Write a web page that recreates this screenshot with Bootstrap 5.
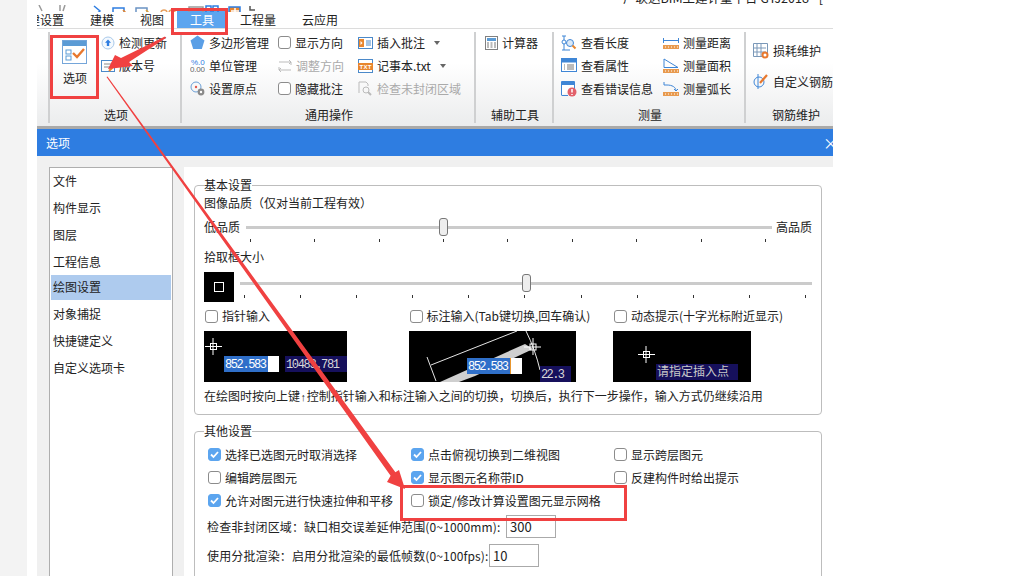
<!DOCTYPE html>
<html lang="zh-CN">

<head>
    <meta charset="UTF-8">
    <meta name="viewport" content="width=device-width, initial-scale=1.0">
    <title>选项</title>
    <link href="https://cdn.jsdelivr.net/npm/bootstrap@5.3.3/dist/css/bootstrap.min.css" rel="stylesheet">
    <style>
        html, body { height: 576px; overflow: hidden; }
        body { font: 12px/18px "Noto Sans CJK SC", "Liberation Sans", sans-serif; color: #222; background: #fff; position: relative; }
        .tc { font-family: "Noto Sans CJK TC", sans-serif; }
        .up-arr { font: 11px "Liberation Mono", monospace; }
        .left-strip { width: 27px; background: #f3f3f3; margin-right: 10px; }
        .app { width: 796px; height: 576px; overflow: hidden; }
        .quick-row { height: 12px; overflow: hidden; position: relative; }
        .quick-title { position: absolute; left: 586px; top: -11px; white-space: nowrap; font-size: 12.5px; }
        .tab-row { height: 17px; border-bottom: 1px solid #dcdcdc; }
        .tab-item { padding: 0 13px; height: 19px; margin-top: -3px; line-height: 21px; flex: none; }
        .tab-item:first-child { margin-left: -22px; }
        .tab-item.on { background: #5ca5ef; color: #fff; }
        .ribbon { height: 100px; padding-top: 3px; background: linear-gradient(#fff 35%, #ebeced); border-bottom: 3px solid #a9a9a9; }
        .rb-group { height: 91px; border-left: 2px solid #cfd0d1; flex: none; }
        .rg-a { width: 132px; margin-left: 11px; }
        .rg-b { width: 294px; }
        .rg-c { width: 78px; }
        .rg-d { width: 192px; }
        .rg-e { width: 100px; }
        .rb-body { flex: 1 1 auto; min-height: 0; margin-top: -1px; }
        .rg-c .rb-body { padding-left: 9px; }
        .rg-d .rb-body, .rg-e .rb-body { padding-left: 7px; }
        .rb-name { height: 16px; line-height: 16px; text-align: center; padding-left: 2px; }
        .rb-row { height: 23px; white-space: nowrap; }
        .rb-row svg { flex: none; }
        .rb-off { color: #aaa; }
        .big-btn { width: 51px; padding-top: 9px; padding-right: 1px; }
        .big-btn span { margin-top: 5px; }
        .col-b1 { width: 96px; padding-left: 8px; }
        .col-b2 { width: 80px; }
        .col-d1 { width: 102px; }
        .caret-down { width: 0; height: 0; border: 3px solid transparent; border-top: 4px solid #666; border-bottom: 0; margin-left: 5px; }
        .cb { width: 13px; height: 13px; border: 1px solid #8c8c8c; border-radius: 3px; background: #fff; flex: none; display: inline-block; }
        .cb.on { background: #5ca5ef; border-color: #5ca5ef; }
        .cb svg { display: block; }
        .dlg-title { height: 27px; background: #2e7de1; color: #fff; padding-left: 9px; line-height: 28px; }
        .dlg-x { margin-right: -5px; font-size: 15px; }
        .dlg-body { background: #f0f0f0; height: 421px; padding: 11px 0 0 12px; }
        .opt-list { width: 124px; height: 420px; border: 1.5px solid #aeaeae; background: #fff; border-radius: 0; padding: 0 1px; flex: none; }
        .opt-list .list-group-item { border: 0; padding: 0 0 0 2px; height: 25px; line-height: 24px; margin: 1px 0; font-size: 12px; color: #222; background: transparent; border-radius: 0; }
        .opt-list .list-group-item.active { background: #aecbee; }
        .set-panel { width: 649px; margin-left: 11px; background: #fff; padding: 10px 11px 0 10px; height: 420px; flex: none; }
        .set-box { border: 1px solid #bdbdbd; border-radius: 4px; padding: 0 9px; margin: 0; }
        .set-box legend { float: none; width: auto; font-size: 12px; line-height: 17px; padding: 0; margin: 0; position: relative; top: -1px; }
        .set-box.basic { height: 238px; margin-bottom: 8px; }
        .set-box.other { height: 200px; }
        .line-h { height: 18px; white-space: nowrap; }
        .qual-row { margin-top: 6px; height: 26px; }
        .qual-low { margin-right: 6px; }
        .sld { position: relative; flex: 1 1 auto; height: 26px; }
        .sld-track { position: absolute; left: 0; right: 0; top: 8px; height: 3px; background: #cbcbcb; }
        .sld-thumb { position: absolute; top: 0; width: 9px; height: 18px; border: 1px solid #777; border-radius: 3px; background: #eee; }
        .sld-ticks { position: absolute; left: 4px; right: 6px; top: 21px; height: 3px; }
        .sld-ticks i { width: 1px; height: 3px; background: #333; display: block; }
        .pick-label { margin-top: 4px; }
        .pick-row { margin-top: 6px; height: 30px; }
        .pick-box { width: 30px; height: 30px; background: #000; flex: none; }
        .pick-box i { display: block; width: 10px; height: 10px; border: 1px solid #fff; }
        .pick-sld { margin: 2px 0 0 6px; }
        .check-grid { display: grid; grid-template-columns: repeat(3, 204.5px); margin-top: 5px; }
        .check-grid .pos { height: 18px; white-space: nowrap; padding-left: 1px; }
        .pic-row { display: grid; grid-template-columns: 205px 204px 138px; margin-top: 6px; }
        .pic-row svg { display: block; }
        .pic-row text { font-family: "Liberation Mono", monospace; font-size: 12px; }
        .pic-row text.cjk { font-family: "Noto Sans CJK SC", sans-serif; }
        .cap-line { margin-top: 5px; }
        .other-grid { display: grid; grid-template-columns: repeat(3, 203px); grid-auto-rows: 23px; margin: 3px 0 0 4px; }
        .other-grid > div { white-space: nowrap; }
        .num-row { height: 23px; margin: 3px 0 6px 3px; white-space: nowrap; }
        .num-a { width: 299px; letter-spacing: .13px; }
        .num-b { width: 282px; letter-spacing: .13px; }
        .num-in { width: 50px; height: 23px; border: 1px solid #aaa; padding: 0 3px; font-size: 13px; line-height: 21px; flex: none; border-radius: 0; background: #fff; color: #222; }
        .mini-txt { font: 8px "Liberation Sans", sans-serif; }
        .mini-bold { font: bold 6px "Liberation Sans", sans-serif; }
        .mark-up { position: absolute; left: 0; top: 0; pointer-events: none; }
    </style>
</head>

<body>
    <div class="d-flex">
        <div class="left-strip"></div>
        <div class="app">
            <div class="quick-row">
                <svg width="230" height="12" fill="none" stroke-width="1.5">
                    <path d="M2 0l3 6M23 0v6M28 0l-2 6" stroke="#9a9a9a"/>
                    <path d="M57 1l6 5-6 5h8" stroke="#2e7de1"/>
                    <rect x="76" y="3" width="11" height="8" stroke="#2e7de1"/>
                    <path d="M86 5l5 5" stroke="#e8862e"/>
                    <rect x="99" y="3" width="11" height="8" stroke="#6a93c4"/>
                    <path d="M109 5l5 5" stroke="#e8a02e"/>
                    <circle cx="127" cy="8" r="3" stroke="#e8a05e"/>
                    <circle cx="135" cy="8" r="3" stroke="#e8a05e"/>
                    <path d="M152 2h14v7h-14z" stroke="#9a9a9a"/>
                    <path d="M169 1v10h5V1zM176 1v10h5V1z" stroke="#2e7de1"/>
                    <rect x="192" y="2" width="11" height="9" fill="#e8862e" stroke="#2e7de1"/>
                    <path d="M198 3v7M194 6h8" stroke="#fff"/>
                    <path d="M213 1v4h5" stroke="#555"/>
                </svg>
                <div class="quick-title">广联达BIM土建计量平台 GTJ2018 - [</div>
            </div>
            <div class="tab-row d-flex">
                <div class="tab-item">建设置</div>
                <div class="tab-item">建模</div>
                <div class="tab-item">视图</div>
                <div class="tab-item on">工具</div>
                <div class="tab-item">工程量</div>
                <div class="tab-item">云应用</div>
            </div>

            <div class="ribbon d-flex">
                <div class="rb-group rg-a d-flex flex-column">
                    <div class="rb-body d-flex">
                        <div class="big-btn d-flex flex-column align-items-center">
                            <svg width="26" height="24" fill="none">
                                <rect x=".5" y=".5" width="24" height="23" fill="#fff" stroke="#74a5d9"/>
                                <rect x="1" y="1" width="23" height="5" fill="#5b9bd5"/>
                                <rect x="4" y="10" width="5" height="4" stroke="#5b9bd5"/>
                                <rect x="4" y="16" width="5" height="4" stroke="#5b9bd5"/>
                                <path d="M11 13l4 4 7-8" stroke="#e8782e" stroke-width="2.4"/>
                            </svg>
                            <span>选项</span>
                        </div>
                        <div>
                            <div class="rb-row d-flex align-items-center gap-1">
                                <svg width="14" height="14" fill="none"><circle cx="7" cy="7" r="6" stroke="#a9c9ea" fill="#f4f9fe"/><path d="M7 3.5l3 3.2H8.2V10H5.8V6.7H4z" fill="#2e7de1"/></svg>
                                <span>检测更新</span>
                            </div>
                            <div class="rb-row d-flex align-items-center gap-1">
                                <svg width="14" height="14" fill="none"><rect x=".5" y="1.5" width="13" height="11" stroke="#4b89c9"/><path d="M3 5h8M3 8h6" stroke="#888"/><path d="M8 12l4-4" stroke="#e8862e" stroke-width="2"/></svg>
                                <span>版本号</span>
                            </div>
                        </div>
                    </div>
                    <div class="rb-name">选项</div>
                </div>

                <div class="rb-group rg-b d-flex flex-column">
                    <div class="rb-body d-flex">
                        <div class="col-b1">
                            <div class="rb-row d-flex align-items-center gap-1">
                                <svg width="15" height="15"><path d="M7.5 .5l7 5-2.7 8.5H3.2L.5 5.5z" fill="#5b9fe6"/></svg>
                                <span>多边形管理</span>
                            </div>
                            <div class="rb-row d-flex align-items-center gap-1">
                                <svg width="15" height="15"><text class="mini-txt" x="1" y="7" fill="#2e7de1">%.0</text><text class="mini-txt" x="0" y="14" fill="#666" textLength="15">0.00</text></svg>
                                <span>单位管理</span>
                            </div>
                            <div class="rb-row d-flex align-items-center gap-1">
                                <svg width="15" height="15" fill="none"><circle cx="6" cy="6" r="5" stroke="#6b9fd6"/><circle cx="6" cy="6" r="1.2" fill="#e2574c"/><circle cx="11" cy="11" r="3.4" fill="#8a8a8a"/><circle cx="11" cy="11" r="1.2" fill="#fff"/></svg>
                                <span>设置原点</span>
                            </div>
                        </div>
                        <div class="col-b2">
                            <div class="rb-row d-flex align-items-center gap-1"><i class="cb"></i><span>显示方向</span></div>
                            <div class="rb-row d-flex align-items-center gap-1 rb-off">
                                <svg width="14" height="14" fill="none" stroke="#bbb"><path d="M1 3h12v3M13 11H1V8"/><path d="M11 1l2 2-2 2M3 9l-2 2 2 2"/></svg>
                                <span>调整方向</span>
                            </div>
                            <div class="rb-row d-flex align-items-center gap-1"><i class="cb"></i><span>隐藏批注</span></div>
                        </div>
                        <div>
                            <div class="rb-row d-flex align-items-center gap-1">
                                <svg width="15" height="14" fill="none"><rect x=".5" y="1.5" width="14" height="11" fill="#fff" stroke="#4b89c9"/><rect x="1" y="3" width="5" height="8" fill="#e8862e"/><path d="M2.5 5l2 2-2 2z" fill="#fff"/><path d="M8 5h5M8 7h5M8 9h5" stroke="#4b89c9"/></svg>
                                <span>插入批注</span><i class="caret-down"></i>
                            </div>
                            <div class="rb-row d-flex align-items-center gap-1">
                                <svg width="15" height="14"><rect x=".5" y=".5" width="14" height="13" fill="#fff" stroke="#4b89c9"/><rect x="0" y="4" width="15" height="7" fill="#e8862e"/><text class="mini-bold" x="1.500" y="9.500" fill="#fff" textLength="12">TXT</text></svg>
                                <span>记事本.txt</span><i class="caret-down"></i>
                            </div>
                            <div class="rb-row d-flex align-items-center gap-1 rb-off">
                                <svg width="15" height="15" fill="none" stroke="#bbb"><path d="M1 12V1h7l2 2v2"/><circle cx="8" cy="9" r="3"/><path d="M10 11l3 3" stroke-width="2"/></svg>
                                <span>检查未封闭区域</span>
                            </div>
                        </div>
                    </div>
                    <div class="rb-name">通用操作</div>
                </div>

                <div class="rb-group rg-c d-flex flex-column">
                    <div class="rb-body">
                        <div class="rb-row d-flex align-items-center gap-1">
                            <svg width="13" height="14" fill="none"><rect x=".5" y=".5" width="12" height="13" fill="#fff" stroke="#808080"/><rect x="2" y="2" width="9" height="3" fill="#5b9bd5"/><path d="M2 7h2M5.500 7h2M9 7h2M2 9h2M5.500 9h2M9 9h2M2 11h2M5.500 11h2M9 11h2" stroke="#777"/></svg>
                            <span>计算器</span>
                        </div>
                    </div>
                    <div class="rb-name">辅助工具</div>
                </div>

                <div class="rb-group rg-d d-flex flex-column">
                    <div class="rb-body d-flex">
                        <div class="col-d1">
                            <div class="rb-row d-flex align-items-center gap-1">
                                <svg width="16" height="16" fill="none" stroke="#3f86d6"><path d="M3 1v14M1 1h4M1 15h8"/><circle cx="3" cy="7" r="2" fill="#fff"/><circle cx="9" cy="8" r="3.500" fill="#dbe9f7"/><path d="M11.500 10.500l3 3" stroke="#e8862e" stroke-width="2"/></svg>
                                <span>查看长度</span>
                            </div>
                            <div class="rb-row d-flex align-items-center gap-1">
                                <svg width="16" height="15" fill="none"><rect x=".5" y=".5" width="15" height="13" fill="#fff" stroke="#3f86d6"/><rect x="1" y="1" width="14" height="3.500" fill="#3f86d6"/><path d="M6 7h7M6 9h7M6 11h7M3 7h1M3 9h1M3 11h1" stroke="#777"/></svg>
                                <span>查看属性</span>
                            </div>
                            <div class="rb-row d-flex align-items-center gap-1">
                                <svg width="16" height="16" fill="none"><path d="M.5 14V.5h13V8" fill="#fff" stroke="#3f86d6"/><path d="M.5 14.500H7" stroke="#3f86d6"/><rect x="1" y="1" width="12" height="3" fill="#3f86d6"/><circle cx="11" cy="11" r="4.500" fill="#e2606a"/><path d="M11 8v3.500M11 13v1" stroke="#fff" stroke-width="1.500"/></svg>
                                <span>查看错误信息</span>
                            </div>
                        </div>
                        <div>
                            <div class="rb-row d-flex align-items-center gap-1">
                                <svg width="16" height="14" fill="none"><path d="M.5 2v5M15.500 2v5M1 4.500h14" stroke="#3f86d6"/><rect y="9" width="16" height="4" fill="#e89a4e"/><path d="M2 11h1M5 11h1M8 11h1M11 11h1M14 11h1" stroke="#fff"/></svg>
                                <span>测量距离</span>
                            </div>
                            <div class="rb-row d-flex align-items-center gap-1">
                                <svg width="16" height="15" fill="none"><path d="M1 1v8.500h14z" stroke="#3f86d6" fill="#fff"/><rect y="11" width="16" height="4" fill="#e89a4e"/><path d="M2 13h1M5 13h1M8 13h1M11 13h1M14 13h1" stroke="#fff"/></svg>
                                <span>测量面积</span>
                            </div>
                            <div class="rb-row d-flex align-items-center gap-1">
                                <svg width="16" height="15" fill="none"><path d="M1 1v3h3c5 0 9 2 9 6" stroke="#3f86d6"/><path d="M11 8l2 2 2-2" stroke="#3f86d6"/><rect y="11" width="16" height="4" fill="#e89a4e"/><path d="M2 13h1M5 13h1M8 13h1M11 13h1M14 13h1" stroke="#fff"/></svg>
                                <span>测量弧长</span>
                            </div>
                        </div>
                    </div>
                    <div class="rb-name">测量</div>
                </div>

                <div class="rb-group rg-e d-flex flex-column">
                    <div class="rb-body pt-2">
                        <div class="rb-row d-flex align-items-center gap-1 mb-2">
                            <svg width="16" height="16" fill="none" stroke="#7a98b8"><path d="M.5 .5h14v13H.5zM4 1v12M8 1v12M1 5h12M1 9h12"/><circle cx="12" cy="12" r="2.500" fill="#fff" stroke="#e8782e" stroke-width="2"/></svg>
                            <span>损耗维护</span>
                        </div>
                        <div class="rb-row d-flex align-items-center gap-1">
                            <svg width="16" height="17" fill="none"><circle cx="6" cy="9" r="5" stroke="#3f86d6"/><path d="M5 1v15" stroke="#3f86d6"/><path d="M7 10l7-8" stroke="#e8782e" stroke-width="2.200"/></svg>
                            <span>自定义钢筋</span>
                        </div>
                    </div>
                    <div class="rb-name">钢筋维护</div>
                </div>
            </div>

            <div class="dlg-title d-flex justify-content-between">
                <span>选项</span><span class="dlg-x">×</span>
            </div>
            <div class="dlg-body d-flex">
                <div class="list-group opt-list">
                    <div class="list-group-item">文件</div>
                    <div class="list-group-item">构件显示</div>
                    <div class="list-group-item">图层</div>
                    <div class="list-group-item">工程信息</div>
                    <div class="list-group-item active">绘图设置</div>
                    <div class="list-group-item">对象捕捉</div>
                    <div class="list-group-item">快捷键定义</div>
                    <div class="list-group-item">自定义选项卡</div>
                </div>

                <div class="set-panel">
                    <fieldset class="set-box basic">
                        <legend>基本设置</legend>
                        <div class="line-h">图像品质<span class="tc">（</span>仅对当前工程有效<span class="tc">）</span></div>
                        <div class="qual-row d-flex">
                            <span class="qual-low">低品质</span>
                            <div class="sld">
                                <div class="sld-track"></div>
                                <div class="sld-thumb" style="left:193px"></div>
                                <div class="sld-ticks d-flex justify-content-between"><i></i><i></i><i></i><i></i><i></i><i></i><i></i><i></i><i></i></div>
                            </div>
                            <span class="ms-1">高品质</span>
                        </div>
                        <div class="line-h pick-label">拾取框大小</div>
                        <div class="pick-row d-flex">
                            <div class="pick-box d-flex align-items-center justify-content-center"><i></i></div>
                            <div class="sld pick-sld">
                                <div class="sld-track"></div>
                                <div class="sld-thumb" style="left:282px"></div>
                                <div class="sld-ticks d-flex justify-content-between"><i></i><i></i><i></i><i></i><i></i><i></i><i></i><i></i><i></i><i></i><i></i></div>
                            </div>
                        </div>
                        <div class="check-grid">
                            <div class="pos d-flex align-items-center gap-1"><i class="cb"></i><span>指针输入</span></div>
                            <div class="pos d-flex align-items-center gap-1"><i class="cb"></i><span>标注输入(Tab键切换,回车确认)</span></div>
                            <div class="pos d-flex align-items-center gap-1"><i class="cb"></i><span>动态提示(十字光标附近显示)</span></div>
                        </div>
                        <div class="pic-row">
                            <svg width="143" height="51">
                                <rect width="143" height="51"/>
                                <g stroke="#fff" fill="none"><path d="M9 7v17M1 15.500h17"/><rect x="6.500" y="12.500" width="6" height="6"/></g>
                                <rect x="20" y="25" width="55" height="16" fill="#fff"/>
                                <rect x="20" y="25" width="44" height="16" fill="#2f6fc9"/>
                                <text x="21" y="37" fill="#fff" textLength="42">852.583</text>
                                <rect x="81" y="25" width="62" height="16" fill="#16105c"/>
                                <text x="82" y="37" fill="#d8d8d8" textLength="54">10483.781</text>
                            </svg>
                            <svg width="167" height="51">
                                <rect width="167" height="51"/>
                                <path d="M31 51l85-38 8 5-58 27-16 6z" fill="#cfcfcf"/>
                                <g stroke="#e5e5e5" fill="none"><path d="M22 34L108 0M18 26l9 24M117 0c6 12 11 26 14 39"/></g>
                                <g stroke="#fff" fill="none"><path d="M124 7v17M115 16h17"/><rect x="121" y="13" width="6" height="6"/></g>
                                <rect x="58" y="27" width="55" height="16" fill="#fff"/>
                                <rect x="58" y="27" width="43" height="16" fill="#2f6fc9"/>
                                <path d="M101.500 27v16" stroke="#e8962e"/>
                                <text x="59" y="39" fill="#fff" textLength="41">852.583</text>
                                <rect x="131" y="35" width="31" height="16" fill="#16105c"/>
                                <text x="132" y="47" fill="#d8d8d8" textLength="24">22.3</text>
                            </svg>
                            <svg width="138" height="51">
                                <rect width="138" height="51"/>
                                <g stroke="#fff" fill="none"><path d="M33 15v17M25 23.500h17"/><rect x="30.500" y="20.500" width="6" height="6"/></g>
                                <rect x="43" y="33" width="82" height="16" fill="#16105c"/>
                                <text class="cjk" x="44" y="45" fill="#c9c9c9">请指定插入点</text>
                            </svg>
                        </div>
                        <div class="line-h cap-line">在绘图时按向上键<span class="up-arr">↑</span>控制指针输入和标注输入之间的切换<span class="tc">，</span>切换后<span class="tc">，</span>执行下一步操作<span class="tc">，</span>输入方式仍继续沿用</div>
                    </fieldset>

                    <fieldset class="set-box other">
                        <legend>其他设置</legend>
                        <div class="other-grid">
                            <div class="d-flex align-items-center gap-1"><i class="cb on"><svg width="11" height="11" fill="none"><path d="M2 5.500l2.500 2.500 4.500-5" stroke="#fff" stroke-width="1.800"/></svg></i><span>选择已选图元时取消选择</span></div>
                            <div class="d-flex align-items-center gap-1"><i class="cb on"><svg width="11" height="11" fill="none"><path d="M2 5.500l2.500 2.500 4.500-5" stroke="#fff" stroke-width="1.800"/></svg></i><span>点击俯视切换到二维视图</span></div>
                            <div class="d-flex align-items-center gap-1"><i class="cb"></i><span>显示跨层图元</span></div>
                            <div class="d-flex align-items-center gap-1"><i class="cb"></i><span>编辑跨层图元</span></div>
                            <div class="d-flex align-items-center gap-1"><i class="cb on"><svg width="11" height="11" fill="none"><path d="M2 5.500l2.500 2.500 4.500-5" stroke="#fff" stroke-width="1.800"/></svg></i><span>显示图元名称带ID</span></div>
                            <div class="d-flex align-items-center gap-1"><i class="cb"></i><span>反建构件时给出提示</span></div>
                            <div class="d-flex align-items-center gap-1"><i class="cb on"><svg width="11" height="11" fill="none"><path d="M2 5.500l2.500 2.500 4.500-5" stroke="#fff" stroke-width="1.800"/></svg></i><span>允许对图元进行快速拉伸和平移</span></div>
                            <div class="d-flex align-items-center gap-1"><i class="cb"></i><span>锁定/修改计算设置图元显示网格</span></div>
                        </div>
                        <div class="num-row d-flex align-items-center"><span class="num-a">检查非封闭区域<span class="tc">：</span>缺口相交误差延伸范围(0~1000mm):</span><input class="num-in form-control" value="300"></div>
                        <div class="num-row d-flex align-items-center"><span class="num-b">使用分批渲染<span class="tc">：</span>启用分批渲染的最低帧数(0~100fps):</span><input class="num-in form-control" value="10"></div>
                    </fieldset>
                </div>
            </div>
        </div>
    </div>

    <svg class="mark-up" width="1028" height="576" fill="none">
        <g stroke="#f04141" stroke-width="3">
            <rect x="172.500" y="9.500" width="54" height="24"/>
            <rect x="51.500" y="36.500" width="46" height="61"/>
            <rect x="401.500" y="486.500" width="224" height="33"/>
        </g>
        <g fill="#f04141" stroke="none">
            <path d="M165 36.500l1 1.500-37 24 4 4-25 3 7-14 6 3z"/>
            <path d="M106.500 77l1-.5L395.400 472.300l3.600-2.300 6 19-18-7 3.600-6.300z"/>
        </g>
    </svg>
    <script src="https://cdn.jsdelivr.net/npm/bootstrap@5.3.3/dist/js/bootstrap.bundle.min.js"></script>
</body>

</html>
